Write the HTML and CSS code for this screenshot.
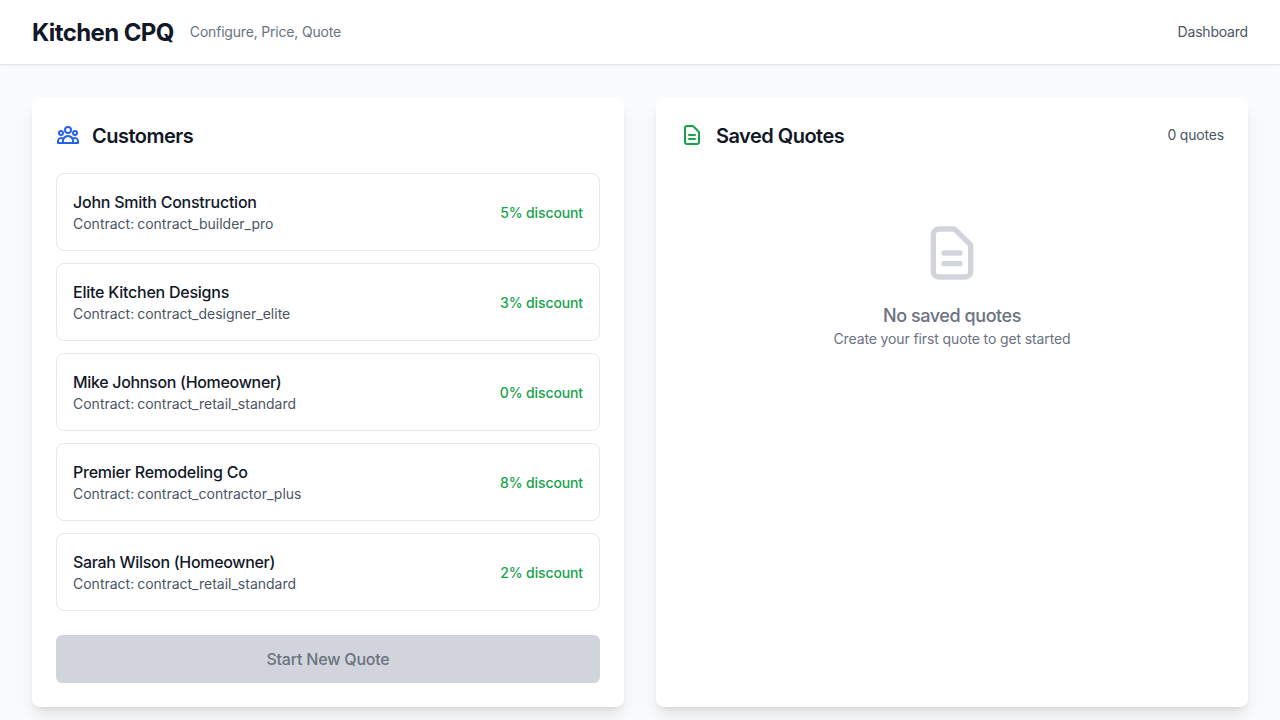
FILE: index.html
```
<!DOCTYPE html>
<html lang="en">
<head>
<meta charset="utf-8">
<title>Kitchen CPQ</title>
<link rel="stylesheet" href="styles.css">
</head>
<body>
<header class="topbar">
  <div class="brand">
    <h1 class="brand-name">Kitchen CPQ</h1>
    <span class="brand-tag">Configure, Price, Quote</span>
  </div>
  <nav class="nav">Dashboard</nav>
</header>
<main class="content">
  <section class="card">
    <div class="card-head">
      <svg class="icon icon-blue" viewBox="0 0 24 24"><path d="M17 20h5v-2a3 3 0 00-5.356-1.857M17 20H7m10 0v-2c0-.656-.126-1.283-.356-1.857M7 20H2v-2a3 3 0 015.356-1.857M7 20v-2c0-.656.126-1.283.356-1.857m0 0a5.002 5.002 0 019.288 0M15 7a3 3 0 11-6 0 3 3 0 016 0zm6 3a2 2 0 11-4 0 2 2 0 014 0zM7 10a2 2 0 11-4 0 2 2 0 014 0z"/></svg>
      <h2 class="card-title">Customers</h2>
    </div>
    <div class="customers">
      <div class="customer"><div><h3 class="customer-name">John Smith Construction</h3><p class="contract">Contract: contract_builder_pro</p></div><span class="discount">5% discount</span></div>
      <div class="customer"><div><h3 class="customer-name">Elite Kitchen Designs</h3><p class="contract">Contract: contract_designer_elite</p></div><span class="discount">3% discount</span></div>
      <div class="customer"><div><h3 class="customer-name homeowner">Mike Johnson (Homeowner)</h3><p class="contract">Contract: contract_retail_standard</p></div><span class="discount">0% discount</span></div>
      <div class="customer"><div><h3 class="customer-name">Premier Remodeling Co</h3><p class="contract">Contract: contract_contractor_plus</p></div><span class="discount">8% discount</span></div>
      <div class="customer"><div><h3 class="customer-name homeowner">Sarah Wilson (Homeowner)</h3><p class="contract">Contract: contract_retail_standard</p></div><span class="discount">2% discount</span></div>
    </div>
    <button class="start" disabled>Start New Quote</button>
  </section>
  <section class="card">
    <div class="card-head">
      <svg class="icon icon-green" viewBox="0 0 24 24"><path d="M9 12h6m-6 4h6m2 5H7a2 2 0 01-2-2V5a2 2 0 012-2h5.586a1 1 0 01.707.293l5.414 5.414a1 1 0 01.293.707V19a2 2 0 01-2 2z"/></svg>
      <h2 class="card-title">Saved Quotes</h2>
      <span class="count">0 quotes</span>
    </div>
    <div class="empty">
      <svg class="icon-empty" viewBox="0 0 24 24"><path d="M9 12h6m-6 4h6m2 5H7a2 2 0 01-2-2V5a2 2 0 012-2h5.586a1 1 0 01.707.293l5.414 5.414a1 1 0 01.293.707V19a2 2 0 01-2 2z"/></svg>
      <p class="empty-title">No saved quotes</p>
      <p class="empty-text">Create your first quote to get started</p>
    </div>
  </section>
</main>
</body>
</html>
```
FILE: styles.css
```
* { box-sizing: border-box; margin: 0; padding: 0; }
html, body { height: 100%; overflow: hidden; }
body { background: #f9fafb; color: #111827; font-family: Inter, sans-serif; font-size: 16px; line-height: 24px; }
.topbar { display: flex; align-items: center; justify-content: space-between; height: 65px; padding: 0 32px; background: #fff; border-bottom: 1px solid #e5e7eb; box-shadow: 0 1px 2px rgba(0,0,0,.05); }
.brand { display: flex; align-items: center; gap: 16px; }
.brand-name { padding-top: 2px; font-size: 24px; line-height: 32px; font-weight: 700; letter-spacing: -.6px; }
.brand-tag { font-size: 14px; line-height: 20px; color: #6b7280; letter-spacing: -.19px; }
.nav { font-size: 14px; line-height: 20px; color: #4b5563; letter-spacing: -.2px; }
.content { display: grid; grid-template-columns: 1fr 1fr; gap: 32px; padding: 32px; }
.card { padding: 24px; background: #fff; border-radius: 8px; box-shadow: 0 10px 15px -3px rgba(0,0,0,.1), 0 4px 6px -4px rgba(0,0,0,.1); }
.card-head { display: flex; align-items: center; height: 28px; margin-bottom: 24px; }
svg { fill: none; stroke: currentColor; stroke-width: 2; stroke-linecap: round; stroke-linejoin: round; }
.icon { width: 24px; height: 24px; margin-right: 12px; }
.icon-blue { color: #2563eb; }
.icon-green { color: #16a34a; }
.card-title { padding-top: 2px; font-size: 20px; line-height: 28px; font-weight: 600; letter-spacing: -.52px; }
.count { margin-left: auto; font-size: 14px; line-height: 20px; color: #4b5563; letter-spacing: -.18px; }
.customers { display: grid; gap: 12px; }
.customer { display: flex; align-items: center; justify-content: space-between; height: 78px; padding: 16px; border: 1px solid #e5e7eb; border-radius: 8px; }
.customer-name { font-size: 16px; line-height: 24px; font-weight: 500; letter-spacing: -.24px; }
.homeowner { letter-spacing: -.32px; }
.contract { font-size: 14px; line-height: 20px; color: #4b5563; word-spacing: -1px; }
.discount { padding-top: 2px; font-size: 14px; line-height: 20px; font-weight: 500; color: #16a34a; letter-spacing: -.12px; }
.start { display: block; width: 100%; height: 48px; margin-top: 24px; border: 0; border-radius: 6px; background: #d1d5db; color: #6b7280; font: 500 16px/24px Inter, sans-serif; letter-spacing: -.2px; }
.empty { display: flex; flex-direction: column; align-items: center; padding-top: 48px; }
.icon-empty { width: 64px; height: 64px; margin-bottom: 17px; color: #d1d5db; }
.empty-title { font-size: 18px; line-height: 28px; font-weight: 500; color: #6b7280; letter-spacing: -.43px; }
.empty-text { margin-top: -1px; font-size: 14px; line-height: 20px; color: #6b7280; letter-spacing: -.12px; }
```
